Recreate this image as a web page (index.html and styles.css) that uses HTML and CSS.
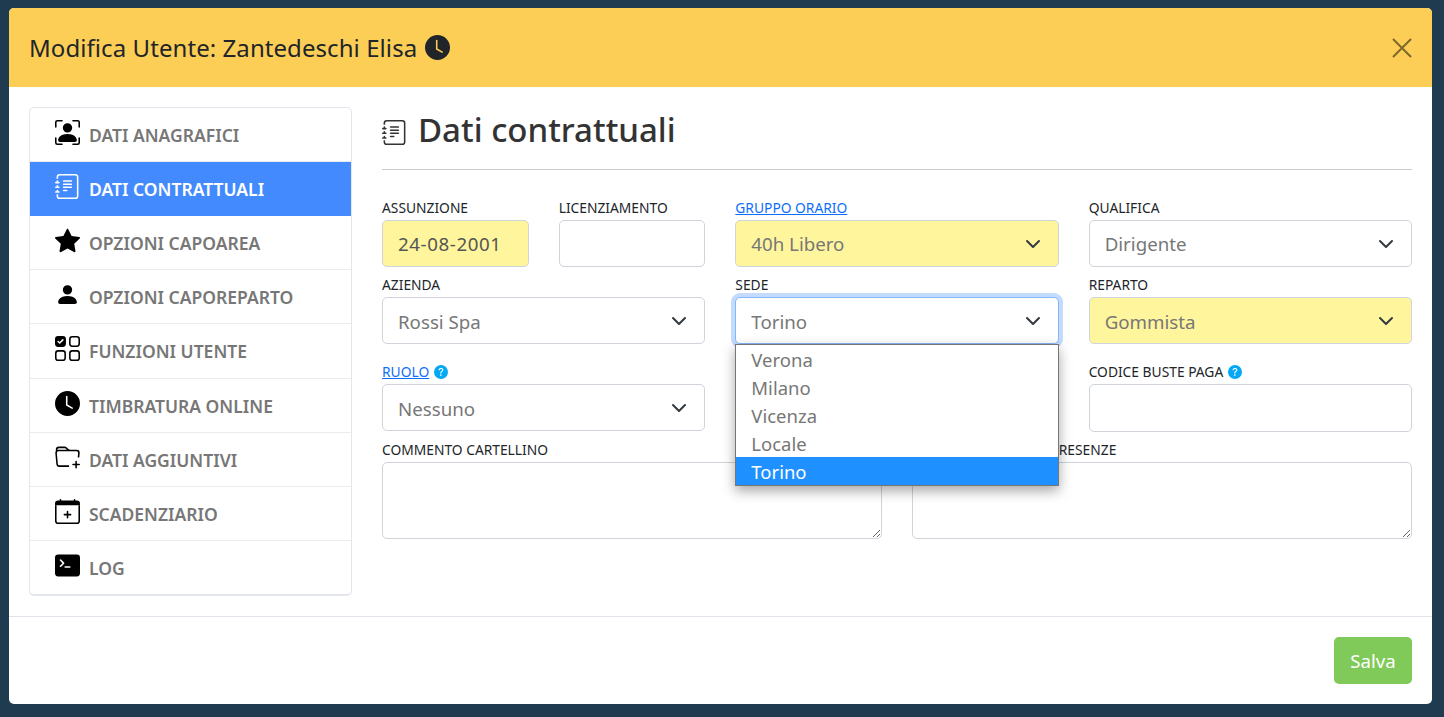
FILE: index.html
```html
<!DOCTYPE html>
<html lang="it">
<head>
<meta charset="utf-8">
<title>Modifica Utente</title>
<link rel="stylesheet" href="styles.css">
</head>
<body>
<svg class="defs" width="0" height="0" aria-hidden="true">
  <symbol id="i-clock" viewBox="0 0 16 16"><path d="M16 8A8 8 0 1 1 0 8a8 8 0 0 1 16 0zM8 3.5a.5.5 0 0 0-1 0V9a.5.5 0 0 0 .252.434l3.5 2a.5.5 0 0 0 .496-.868L8 8.71V3.5z"/></symbol>
  <symbol id="i-person-box" viewBox="0 0 16 16"><path d="M1.5 1a.5.5 0 0 0-.5.5v3a.5.5 0 0 1-1 0v-3A1.5 1.5 0 0 1 1.5 0h3a.5.5 0 0 1 0 1h-3zM11 .5a.5.5 0 0 1 .5-.5h3A1.5 1.5 0 0 1 16 1.5v3a.5.5 0 0 1-1 0v-3a.5.5 0 0 0-.5-.5h-3a.5.5 0 0 1-.5-.5zM.5 11a.5.5 0 0 1 .5.5v3a.5.5 0 0 0 .5.5h3a.5.5 0 0 1 0 1h-3A1.5 1.5 0 0 1 0 14.5v-3a.5.5 0 0 1 .5-.5zm15 0a.5.5 0 0 1 .5.5v3a1.5 1.5 0 0 1-1.5 1.5h-3a.5.5 0 0 1 0-1h3a.5.5 0 0 0 .5-.5v-3a.5.5 0 0 1 .5-.5z"/><path d="M3 14s-1 0-1-1 1-4 6-4 6 3 6 4-1 1-1 1H3zm8-9a3 3 0 1 1-6 0 3 3 0 0 1 6 0z"/></symbol>
  <symbol id="i-journal" viewBox="0 0 16 16"><path d="M5 10.5a.5.5 0 0 1 .5-.5h2a.5.5 0 0 1 0 1h-2a.5.5 0 0 1-.5-.5zm0-2a.5.5 0 0 1 .5-.5h5a.5.5 0 0 1 0 1h-5a.5.5 0 0 1-.5-.5zm0-2a.5.5 0 0 1 .5-.5h5a.5.5 0 0 1 0 1h-5a.5.5 0 0 1-.5-.5zm0-2a.5.5 0 0 1 .5-.5h5a.5.5 0 0 1 0 1h-5a.5.5 0 0 1-.5-.5z"/><path d="M3 0h10a2 2 0 0 1 2 2v12a2 2 0 0 1-2 2H3a2 2 0 0 1-2-2v-1h1v1a1 1 0 0 0 1 1h10a1 1 0 0 0 1-1V2a1 1 0 0 0-1-1H3a1 1 0 0 0-1 1v1H1V2a2 2 0 0 1 2-2z"/><path d="M1 5v-.5a.5.5 0 0 1 1 0V5h.5a.5.5 0 0 1 0 1h-2a.5.5 0 0 1 0-1H1zm0 3v-.5a.5.5 0 0 1 1 0V8h.5a.5.5 0 0 1 0 1h-2a.5.5 0 0 1 0-1H1zm0 3v-.5a.5.5 0 0 1 1 0v.5h.5a.5.5 0 0 1 0 1h-2a.5.5 0 0 1 0-1H1z"/></symbol>
  <symbol id="i-star" viewBox="0 0 16 16"><path d="M3.612 15.443c-.386.198-.824-.149-.746-.592l.83-4.73L.173 6.765c-.329-.314-.158-.888.283-.95l4.898-.696L7.538.792c.197-.39.73-.39.927 0l2.184 4.327 4.898.696c.441.062.612.636.282.95l-3.522 3.356.83 4.73c.078.443-.36.79-.746.592L8 13.187l-4.389 2.256z"/></symbol>
  <symbol id="i-person" viewBox="0 0 16 16"><path d="M3 14s-1 0-1-1 1-4 6-4 6 3 6 4-1 1-1 1H3zm5-6a3 3 0 1 0 0-6 3 3 0 0 0 0 6z"/></symbol>
  <symbol id="i-checks" viewBox="0 0 16 16"><path d="M2 10h3a1 1 0 0 1 1 1v3a1 1 0 0 1-1 1H2a1 1 0 0 1-1-1v-3a1 1 0 0 1 1-1zm9-9h3a1 1 0 0 1 1 1v3a1 1 0 0 1-1 1h-3a1 1 0 0 1-1-1V2a1 1 0 0 1 1-1zm0 9a1 1 0 0 0-1 1v3a1 1 0 0 0 1 1h3a1 1 0 0 0 1-1v-3a1 1 0 0 0-1-1h-3zm0-10a2 2 0 0 0-2 2v3a2 2 0 0 0 2 2h3a2 2 0 0 0 2-2V2a2 2 0 0 0-2-2h-3zM2 9a2 2 0 0 0-2 2v3a2 2 0 0 0 2 2h3a2 2 0 0 0 2-2v-3a2 2 0 0 0-2-2H2zm7 2a2 2 0 0 1 2-2h3a2 2 0 0 1 2 2v3a2 2 0 0 1-2 2h-3a2 2 0 0 1-2-2v-3zM0 2a2 2 0 0 1 2-2h3a2 2 0 0 1 2 2v3a2 2 0 0 1-2 2H2a2 2 0 0 1-2-2V2zm5.354.854a.5.5 0 1 0-.708-.708L3 3.793l-.646-.647a.5.5 0 1 0-.708.708l1 1a.5.5 0 0 0 .708 0l2-2z"/></symbol>
  <symbol id="i-folder" viewBox="0 0 16 16"><path d="m.5 3 .04.87a1.99 1.99 0 0 0-.342 1.311l.637 7A2 2 0 0 0 2.826 14H9v-1H2.826a1 1 0 0 1-.995-.91l-.637-7A1 1 0 0 1 2.19 4h11.62a1 1 0 0 1 .996 1.09L14.54 8h1.005l.256-2.819A2 2 0 0 0 13.81 3H9.828a2 2 0 0 1-1.414-.586l-.828-.828A2 2 0 0 0 6.172 1H2.5a2 2 0 0 0-2 2zm5.672-1a1 1 0 0 1 .707.293L7.586 3H2.19c-.24 0-.47.042-.683.12L1.5 2.98a1 1 0 0 1 1-.98h3.672z"/><path d="M13.5 10a.5.5 0 0 1 .5.5V12h1.5a.5.5 0 1 1 0 1H14v1.5a.5.5 0 1 1-1 0V13h-1.5a.5.5 0 0 1 0-1H13v-1.5a.5.5 0 0 1 .5-.5z"/></symbol>
  <symbol id="i-calendar" viewBox="0 0 16 16"><path d="M4 .5a.5.5 0 0 0-1 0V1H2a2 2 0 0 0-2 2v1h16V3a2 2 0 0 0-2-2h-1V.5a.5.5 0 0 0-1 0V1H4V.5z"/><path fill-rule="evenodd" d="M16 14V4H0v10a2 2 0 0 0 2 2h12a2 2 0 0 0 2-2zM1 4h14v10a1 1 0 0 1-1 1H2a1 1 0 0 1-1-1V4z"/><path d="M8 7.5a.5.5 0 0 1 .5.5v1.5H10a.5.5 0 0 1 0 1H8.5V12a.5.5 0 0 1-1 0v-1.5H6a.5.5 0 0 1 0-1h1.5V8a.5.5 0 0 1 .5-.5z"/></symbol>
  <symbol id="i-terminal" viewBox="0 0 16 16"><path d="M0 3a2 2 0 0 1 2-2h12a2 2 0 0 1 2 2v10a2 2 0 0 1-2 2H2a2 2 0 0 1-2-2V3zm9.5 5.5h-3a.5.5 0 0 0 0 1h3a.5.5 0 0 0 0-1zm-6.354-.354a.5.5 0 1 0 .708.708l2-2a.5.5 0 0 0 0-.708l-2-2a.5.5 0 1 0-.708.708L4.793 6.5 3.146 8.146z"/></symbol>
  <symbol id="i-help" viewBox="0 0 16 16"><path d="M16 8A8 8 0 1 1 0 8a8 8 0 0 1 16 0zM5.496 6.033h.825c.138 0 .248-.113.266-.25.09-.656.54-1.134 1.342-1.134.686 0 1.314.343 1.314 1.168 0 .635-.374.927-.965 1.371-.673.489-1.206 1.06-1.168 1.987l.003.217a.25.25 0 0 0 .25.246h.811a.25.25 0 0 0 .25-.25v-.105c0-.718.273-.927 1.01-1.486.609-.463 1.244-.977 1.244-2.056 0-1.511-1.276-2.241-2.673-2.241-1.267 0-2.655.59-2.75 2.286a.237.237 0 0 0 .241.247zm2.325 6.443c.61 0 1.029-.394 1.029-.927 0-.552-.42-.94-1.029-.94-.584 0-1.009.388-1.009.94 0 .533.425.927 1.01.927z"/></symbol>
</svg>

<div class="modal">
  <header class="modal-header">
    <h5 class="modal-title">Modifica Utente: Zantedeschi Elisa<svg class="title-icon"><use href="#i-clock"/></svg></h5>
    <button class="close" type="button" aria-label="Chiudi">
      <svg viewBox="0 0 20 20"><path d="M1 1l18 18M19 1L1 19"/></svg>
    </button>
  </header>

  <div class="modal-body">
    <nav class="side-nav">
      <a class="nav-item"><svg class="nav-icon"><use href="#i-person-box"/></svg><span>DATI ANAGRAFICI</span></a>
      <a class="nav-item active"><svg class="nav-icon"><use href="#i-journal"/></svg><span>DATI CONTRATTUALI</span></a>
      <a class="nav-item"><svg class="nav-icon"><use href="#i-star"/></svg><span>OPZIONI CAPOAREA</span></a>
      <a class="nav-item"><svg class="nav-icon"><use href="#i-person"/></svg><span>OPZIONI CAPOREPARTO</span></a>
      <a class="nav-item"><svg class="nav-icon"><use href="#i-checks"/></svg><span>FUNZIONI UTENTE</span></a>
      <a class="nav-item"><svg class="nav-icon"><use href="#i-clock"/></svg><span>TIMBRATURA ONLINE</span></a>
      <a class="nav-item"><svg class="nav-icon"><use href="#i-folder"/></svg><span>DATI AGGIUNTIVI</span></a>
      <a class="nav-item"><svg class="nav-icon"><use href="#i-calendar"/></svg><span>SCADENZIARIO</span></a>
      <a class="nav-item"><svg class="nav-icon"><use href="#i-terminal"/></svg><span>LOG</span></a>
    </nav>

    <section class="content">
      <div class="page-head">
        <svg class="head-icon"><use href="#i-journal"/></svg>
        <h2 class="page-title">Dati contrattuali</h2>
      </div>

      <div class="form-row row-a">
        <div class="field span-2">
          <label class="lbl">ASSUNZIONE</label>
          <input class="control hl date" type="text" value="24-08-2001">
        </div>
        <div class="field span-2">
          <label class="lbl">LICENZIAMENTO</label>
          <input class="control" type="text">
        </div>
        <div class="field span-4">
          <label class="lbl"><a class="lnk">GRUPPO ORARIO</a></label>
          <select class="control pick hl"><option>40h Libero</option></select>
        </div>
        <div class="field span-4">
          <label class="lbl">QUALIFICA</label>
          <select class="control pick"><option>Dirigente</option></select>
        </div>
      </div>

      <div class="form-row row-b">
        <div class="field span-4">
          <label class="lbl">AZIENDA</label>
          <select class="control pick low"><option>Rossi Spa</option></select>
        </div>
        <div class="field span-4 has-list">
          <label class="lbl">SEDE</label>
          <select class="control pick focus low"><option>Torino</option></select>
          <ul class="list">
            <li>Verona</li>
            <li>Milano</li>
            <li>Vicenza</li>
            <li>Locale</li>
            <li class="sel">Torino</li>
          </ul>
        </div>
        <div class="field span-4">
          <label class="lbl">REPARTO</label>
          <select class="control pick hl low"><option>Gommista</option></select>
        </div>
      </div>

      <div class="form-row row-c">
        <div class="field span-4">
          <label class="lbl"><a class="lnk">RUOLO</a> <svg class="help"><use href="#i-help"/></svg></label>
          <select class="control pick low"><option>Nessuno</option></select>
        </div>
        <div class="field span-4">
          <div class="lbl"></div>
          <input class="control" type="text" aria-label="Campo nascosto dal menu">
        </div>
        <div class="field span-4">
          <label class="lbl">CODICE BUSTE PAGA <svg class="help"><use href="#i-help"/></svg></label>
          <input class="control tall" type="text">
        </div>
      </div>

      <div class="form-row row-d">
        <div class="field span-6">
          <label class="lbl">COMMENTO CARTELLINO</label>
          <textarea class="control area"></textarea>
        </div>
        <div class="field span-6">
          <label class="lbl">COMMENTO FOGLIO PRESENZE</label>
          <textarea class="control area"></textarea>
        </div>
      </div>
    </section>
  </div>

  <footer class="modal-footer">
    <button class="save" type="button">Salva</button>
  </footer>
</div>
</body>
</html>
```

FILE: styles.css
```css
* { box-sizing: border-box; }

html, body { height: 100%; }

body {
  margin: 0;
  padding: 8px 12px 0 9px;
  background: #1f3b4f;
  font-family: "Noto Sans", "Open Sans", sans-serif;
  color: #212529;
  overflow: hidden;
}

.defs { position: absolute; }

.modal {
  height: 696px;
  background: #fff;
  border-radius: 5px;
  display: flex;
  flex-direction: column;
  overflow: hidden;
}

.modal-header {
  height: 79px;
  flex: none;
  background: #fdce55;
  display: flex;
  align-items: center;
  justify-content: space-between;
  padding: 0 20px 0 20px;
}

.modal-title {
  margin: 0;
  font-size: 24px;
  font-weight: 400;
  letter-spacing: 0.07px;
  color: #212529;
  display: flex;
  align-items: center;
  gap: 8px;
  white-space: pre;
}

.title-icon { width: 25px; height: 25px; fill: #212529; }

.close {
  width: 20px;
  height: 20px;
  padding: 0;
  border: 0;
  background: none;
  display: block;
}

.close svg { display: block; width: 20px; height: 20px; }
.close path { stroke: #000; stroke-opacity: .5; stroke-width: 2; fill: none; }

.modal-body {
  flex: 1;
  min-height: 0;
  padding: 20px 20px 19px;
  display: flex;
  gap: 30px;
}

.side-nav {
  width: 323px;
  flex: none;
  align-self: flex-start;
  border: 1px solid #e3e6ec;
  border-bottom-width: 2px;
  border-radius: 5px;
  overflow: hidden;
}

.nav-item {
  height: 54.11px;
  display: flex;
  align-items: flex-start;
  gap: 9px;
  padding: 12px 0 0 25px;
  border-bottom: 1px solid #e9ecef;
  color: #777;
  font-size: 17.5px;
  font-weight: 600;
}

.nav-item:last-child { height: 53px; border-bottom: 0; }

.nav-item span { padding-top: 3px; line-height: 24px; white-space: nowrap; }

.nav-icon { width: 25px; height: 25px; flex: none; fill: #000; }

.nav-item.active {
  background: #448aff;
  color: #fff;
  border-bottom-color: #448aff;
}

.nav-item.active .nav-icon { fill: #fff; }

.content { flex: 1; min-width: 0; }

.page-head {
  height: 63px;
  border-bottom: 1px solid #c8cbd0;
  display: flex;
  align-items: flex-start;
  gap: 11px;
  padding-top: 1px;
}

.head-icon { width: 25px; height: 25px; margin-top: 12px; fill: #333; }

.page-title {
  margin: 0;
  font-size: 33px;
  font-weight: 500;
  line-height: 44px;
  color: #333;
}

.form-row {
  display: grid;
  grid-template-columns: repeat(12, 1fr);
  column-gap: 30px;
  margin-top: 10px;
}

.row-a { margin-top: 30px; }
.row-c { margin-top: 20px; }

.span-2 { grid-column: span 2; }
.span-4 { grid-column: span 4; }
.span-6 { grid-column: span 6; }

.field { position: relative; min-width: 0; }

.lbl {
  display: block;
  height: 20px;
  font-size: 13.8px;
  line-height: 15px;
  white-space: nowrap;
  color: #212529;
}

.lnk { color: #0d6efd; text-decoration: underline; }

.help { width: 14px; height: 14px; fill: #03a9f4; vertical-align: -2px; margin-left: 1px; }

.control {
  display: block;
  width: 100%;
  height: 47px;
  padding: 8px 15px;
  border: 1px solid #ced4da;
  border-radius: 5px;
  background-color: #fff;
  font-family: inherit;
  font-size: 18.7px;
  color: #777;
  outline: none;
}

.date { letter-spacing: 0.6px; color: #555; }

.hl { background-color: #fff59d; }

.tall { height: 48px; }

.pick {
  appearance: none;
  background-image: url("data:image/svg+xml,%3Csvg xmlns='http://www.w3.org/2000/svg' viewBox='0 0 16 16'%3E%3Cpath fill='none' stroke='%23343a40' stroke-linecap='round' stroke-linejoin='round' stroke-width='2' d='M2 5l6 6 6-6'/%3E%3C/svg%3E");
  background-repeat: no-repeat;
  background-position: right 17px center;
  background-size: 16px 16px;
}

.low { padding-top: 10px; }

.focus {
  border-color: #86b7fe;
  box-shadow: 0 0 0 4px rgba(13, 110, 253, .25);
}

.area { height: 77px; resize: both; }

.list {
  position: absolute;
  top: 67px;
  left: 0;
  right: 0;
  z-index: 5;
  margin: 0;
  padding: 0;
  list-style: none;
  background: #fff;
  border: 1px solid #767676;
  box-shadow: 0 5px 12px rgba(0, 0, 0, .35);
  font-size: 18.5px;
  color: #777;
}

.list li { height: 28px; line-height: 29px; padding-left: 15px; }
.list li.sel { background: #1e90ff; color: #fff; }

.modal-footer {
  height: 88px;
  flex: none;
  border-top: 1px solid #e0e3ea;
  padding: 20px 20px 0;
  display: flex;
  justify-content: flex-end;
}

.save {
  width: 78px;
  height: 47px;
  border: 0;
  border-radius: 5px;
  background: #7fca59;
  color: #fff;
  font-family: inherit;
  font-size: 18.7px;
}
```
